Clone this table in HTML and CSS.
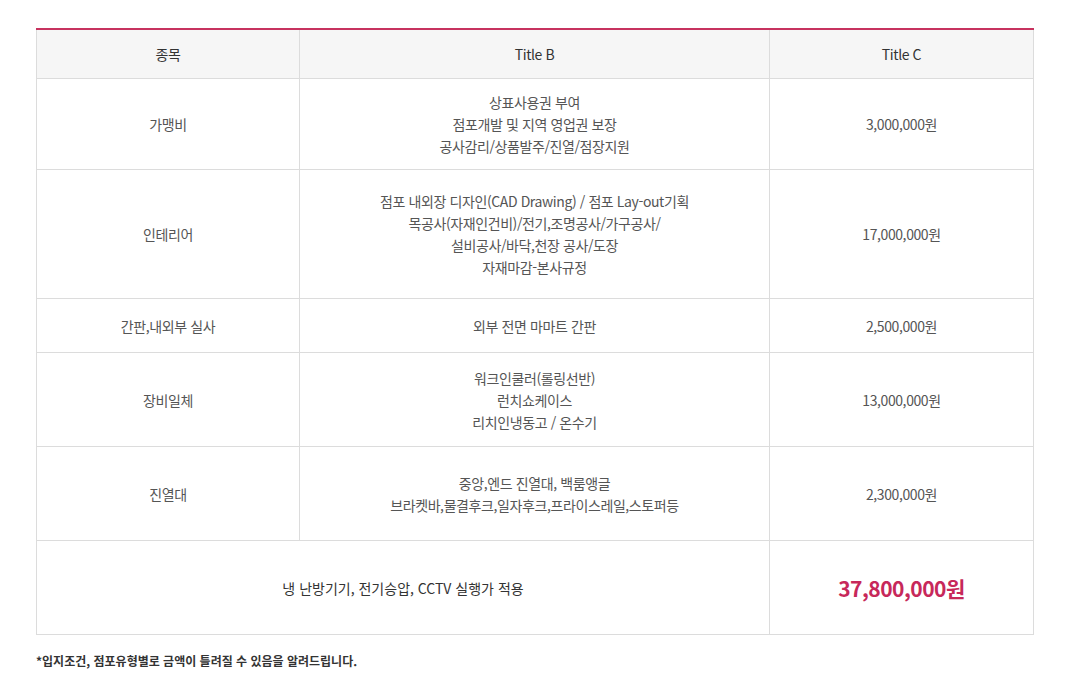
FILE: index.html
```html
<!DOCTYPE html>
<html lang="ko">
<head>
<meta charset="utf-8">
<title>가맹 비용</title>
<link rel="stylesheet" href="styles.css">
</head>
<body>
<div class="wrap">
  <table class="cost">
    <colgroup>
      <col class="c1"><col class="c2"><col class="c3">
    </colgroup>
    <thead>
      <tr class="head"><th>종목</th><th>Title B</th><th>Title C</th></tr>
    </thead>
    <tbody>
      <tr class="r1">
        <td>가맹비</td>
        <td>상표사용권 부여<br>점포개발 및 지역 영업권 보장<br>공사감리/상품발주/진열/점장지원</td>
        <td class="num">3,000,000원</td>
      </tr>
      <tr class="r2">
        <td>인테리어</td>
        <td>점포 내외장 디자인(CAD Drawing) / 점포 Lay-out기획<br>목공사(자재인건비)/전기,조명공사/가구공사/<br>설비공사/바닥,천장 공사/도장<br>자재마감-본사규정</td>
        <td class="num">17,000,000원</td>
      </tr>
      <tr class="r3">
        <td>간판,내외부 실사</td>
        <td>외부 전면 마마트 간판</td>
        <td class="num">2,500,000원</td>
      </tr>
      <tr class="r4">
        <td>장비일체</td>
        <td>워크인쿨러(롤링선반)<br>런치쇼케이스<br>리치인냉동고 / 온수기</td>
        <td class="num">13,000,000원</td>
      </tr>
      <tr class="r5">
        <td>진열대</td>
        <td>중앙,엔드 진열대, 백룸앵글<br>브라켓바,물결후크,일자후크,프라이스레일,스토퍼등</td>
        <td class="num">2,300,000원</td>
      </tr>
      <tr class="total">
        <td colspan="2" class="total-label">냉 난방기기, 전기승압, CCTV 실행가 적용</td>
        <td class="total-price">37,800,000원</td>
      </tr>
    </tbody>
  </table>
  <p class="note">*입지조건, 점포유형별로 금액이 틀려질 수 있음을 알려드립니다.</p>
</div>
</body>
</html>
```
FILE: styles.css
```css
html, body {
  margin: 0;
  padding: 0;
  background: #fff;
}
body {
  font-family: "Noto Sans CJK KR", "Noto Sans", sans-serif;
  color: #555;
}
.wrap {
  padding: 28px 0 0 36px;
  width: 997px;
}
.cost {
  width: 997px;
  border-collapse: collapse;
  table-layout: fixed;
  border-top: 2px solid #c7325f;
  font-size: 14px;
  line-height: 22px;
  letter-spacing: -0.4px;
}
.c1 { width: 263px; }
.c2 { width: 470px; }
.c3 { width: 264px; }
.cost th, .cost td {
  border: 1px solid #dcdcdc;
  text-align: center;
  vertical-align: middle;
  padding: 0;
}
.cost thead th {
  border-top: none;
  background: #f6f6f6;
  font-weight: normal;
  color: #333;
  height: 48px;
}
.r1 td { height: 90px; }
.r2 td { height: 128px; }
.r3 td { height: 53px; }
.r4 td { height: 93px; }
.r5 td { height: 93px; }
.total td { height: 93px; }
.total-label {
  font-size: 14px;
  color: #333;
  letter-spacing: 0;
}
.total-price {
  font-size: 21px;
  font-weight: bold;
  color: #c7285a;
  letter-spacing: -0.5px;
}
.note {
  margin: 17px 0 0 0;
  font-size: 12px;
  font-weight: bold;
  color: #333;
  letter-spacing: 0;
  line-height: 18px;
}
```
